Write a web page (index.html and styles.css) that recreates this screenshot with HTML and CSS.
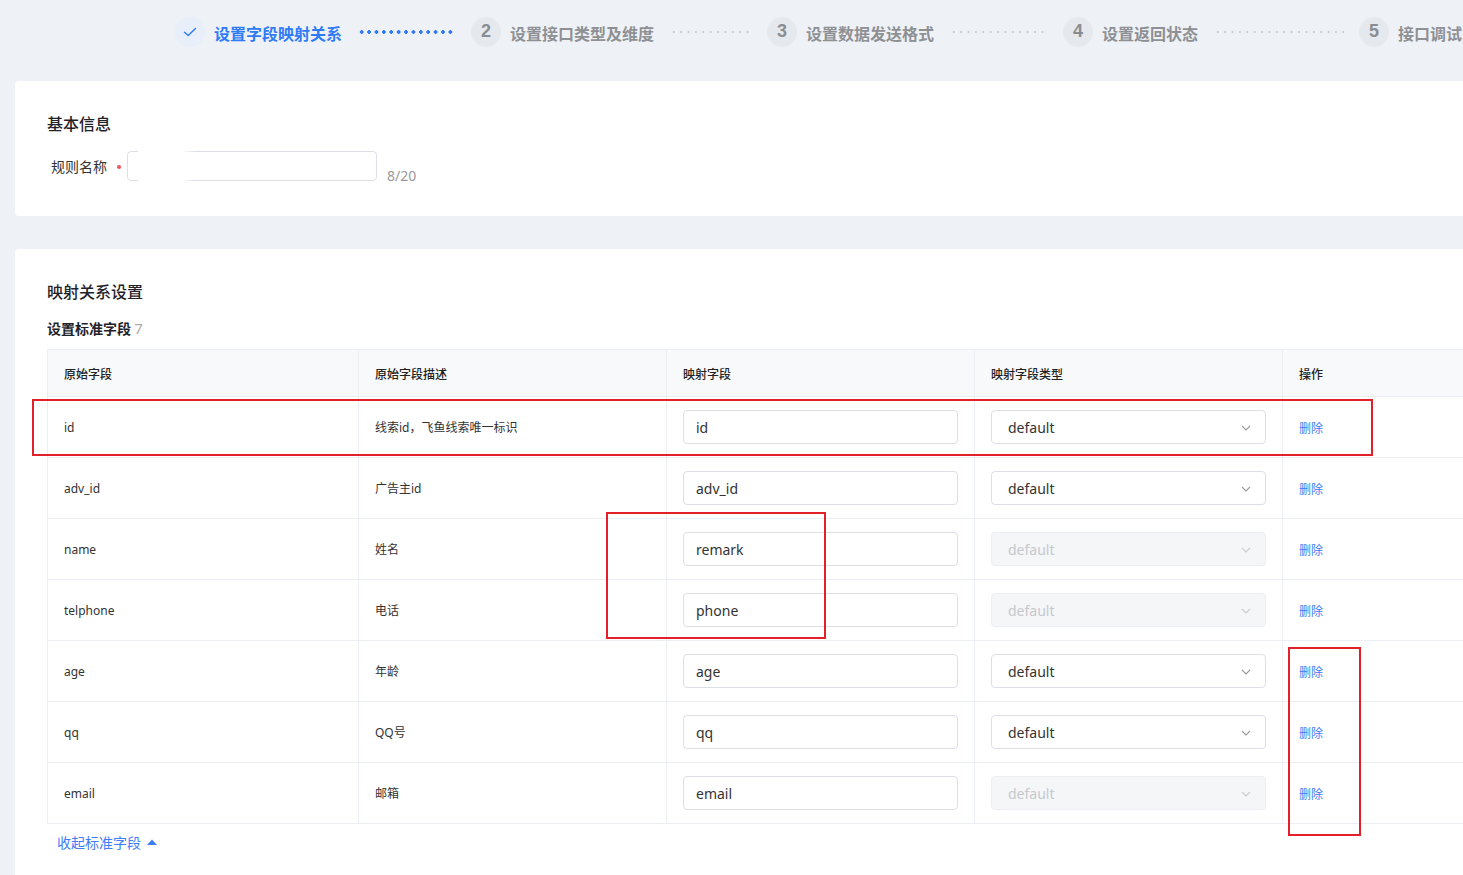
FILE: index.html
```html
<!DOCTYPE html>
<html lang="zh-CN">
<head>
<meta charset="utf-8">
<title>设置字段映射关系</title>
<link rel="stylesheet" href="styles.css">
</head>
<body>
<div class="page">
  <div class="steps">
    <div class="step step-done">
      <span class="step-icon done"><svg width="14" height="14" viewBox="0 0 14 14"><path d="M1.5 7.2 L5.2 10.6 L12.5 3.4" fill="none" stroke="#2f7bf5" stroke-width="1.4" stroke-linecap="round" stroke-linejoin="round"/></svg></span>
      <span class="step-title active">设置字段映射关系</span>
    </div>
    <span class="dots dots-blue w98"></span>
    <div class="step">
      <span class="step-icon">2</span>
      <span class="step-title">设置接口类型及维度</span>
    </div>
    <span class="dots w82"></span>
    <div class="step">
      <span class="step-icon">3</span>
      <span class="step-title">设置数据发送格式</span>
    </div>
    <span class="dots w98"></span>
    <div class="step">
      <span class="step-icon">4</span>
      <span class="step-title">设置返回状态</span>
    </div>
    <span class="dots w130"></span>
    <div class="step">
      <span class="step-icon">5</span>
      <span class="step-title">接口调试</span>
    </div>
  </div>

  <section class="card card-basic">
    <h2 class="card-title">基本信息</h2>
    <div class="form-row">
      <label class="form-label">规则名称</label>
      <span class="req-dot"></span>
      <div class="name-input"><span class="redact"></span></div>
      <span class="counter">8/20</span>
    </div>
  </section>

  <section class="card card-map">
    <h2 class="card-title">映射关系设置</h2>
    <div class="sub-title">设置标准字段 <span class="count">7</span></div>
    <div class="grid">
      <div class="cell head">原始字段</div>
      <div class="cell head">原始字段描述</div>
      <div class="cell head">映射字段</div>
      <div class="cell head">映射字段类型</div>
      <div class="cell head">操作</div>

      <div class="cell">id</div>
      <div class="cell">线索id，飞鱼线索唯一标识</div>
      <div class="cell"><div class="field">id</div></div>
      <div class="cell"><div class="select"><span>default</span><svg class="arrow" width="10" height="6" viewBox="0 0 10 6"><path d="M1 1 L5 5 L9 1" fill="none" stroke="#999" stroke-width="1.1"/></svg></div></div>
      <div class="cell"><a class="link">删除</a></div>

      <div class="cell">adv_id</div>
      <div class="cell">广告主id</div>
      <div class="cell"><div class="field">adv_id</div></div>
      <div class="cell"><div class="select"><span>default</span><svg class="arrow" width="10" height="6" viewBox="0 0 10 6"><path d="M1 1 L5 5 L9 1" fill="none" stroke="#999" stroke-width="1.1"/></svg></div></div>
      <div class="cell"><a class="link">删除</a></div>

      <div class="cell">name</div>
      <div class="cell">姓名</div>
      <div class="cell"><div class="field">remark</div></div>
      <div class="cell"><div class="select disabled"><span>default</span><svg class="arrow" width="10" height="6" viewBox="0 0 10 6"><path d="M1 1 L5 5 L9 1" fill="none" stroke="#ccc" stroke-width="1.1"/></svg></div></div>
      <div class="cell"><a class="link">删除</a></div>

      <div class="cell">telphone</div>
      <div class="cell">电话</div>
      <div class="cell"><div class="field">phone</div></div>
      <div class="cell"><div class="select disabled"><span>default</span><svg class="arrow" width="10" height="6" viewBox="0 0 10 6"><path d="M1 1 L5 5 L9 1" fill="none" stroke="#ccc" stroke-width="1.1"/></svg></div></div>
      <div class="cell"><a class="link">删除</a></div>

      <div class="cell">age</div>
      <div class="cell">年龄</div>
      <div class="cell"><div class="field">age</div></div>
      <div class="cell"><div class="select"><span>default</span><svg class="arrow" width="10" height="6" viewBox="0 0 10 6"><path d="M1 1 L5 5 L9 1" fill="none" stroke="#999" stroke-width="1.1"/></svg></div></div>
      <div class="cell"><a class="link">删除</a></div>

      <div class="cell">qq</div>
      <div class="cell">QQ号</div>
      <div class="cell"><div class="field">qq</div></div>
      <div class="cell"><div class="select"><span>default</span><svg class="arrow" width="10" height="6" viewBox="0 0 10 6"><path d="M1 1 L5 5 L9 1" fill="none" stroke="#999" stroke-width="1.1"/></svg></div></div>
      <div class="cell"><a class="link">删除</a></div>

      <div class="cell">email</div>
      <div class="cell">邮箱</div>
      <div class="cell"><div class="field">email</div></div>
      <div class="cell"><div class="select disabled"><span>default</span><svg class="arrow" width="10" height="6" viewBox="0 0 10 6"><path d="M1 1 L5 5 L9 1" fill="none" stroke="#ccc" stroke-width="1.1"/></svg></div></div>
      <div class="cell"><a class="link">删除</a></div>
    </div>
    <a class="collapse">收起标准字段 <svg width="10" height="6" viewBox="0 0 10 6"><path d="M0 6 L5 0.5 L10 6 Z" fill="#3f7cf6"/></svg></a>
  </section>

  <div class="mark mark-1"></div>
  <div class="mark mark-2"></div>
  <div class="mark mark-3"></div>
</div>
</body>
</html>
```

FILE: styles.css
```css
* { box-sizing: border-box; }
html, body {
  margin: 0;
  padding: 0;
  background: #eef2f6;
  overflow: hidden;
}
body {
  font-family: "Noto Sans", "Noto Sans CJK SC", sans-serif;
  color: #333;
  width: 1463px;
  height: 875px;
}
.page {
  position: relative;
  width: 1463px;
  height: 875px;
  overflow: hidden;
}

/* steps */
.steps {
  display: flex;
  align-items: center;
  height: 81px;
  padding: 0 0 18px 175px;
  white-space: nowrap;
}
.step {
  display: flex;
  align-items: center;
  gap: 9px;
  flex: none;
}
.step-icon {
  width: 30px;
  height: 30px;
  border-radius: 50%;
  background: #e5e8ec;
  color: #8a8d92;
  font-family: "Liberation Sans", "Noto Sans", sans-serif;
  font-weight: 700;
  font-size: 18px;
  display: flex;
  align-items: center;
  justify-content: center;
  flex: none;
}
.step-icon.done {
  background: #e8eefa;
}
.step-title {
  font-family: "Noto Sans CJK SC", sans-serif;
  font-size: 16px;
  font-weight: 700;
  color: #8e9094;
  line-height: 30px;
  padding-top: 2px;
}
.step-title.active { color: #2f7bf5; }
.dots {
  flex: none;
  height: 4px;
  margin: 0 15px 0 16px;
  background-image: radial-gradient(circle, #c9cdd3 1.1px, transparent 1.4px);
  background-size: 7.4px 4px;
  background-repeat: repeat-x;
}
.dots-blue {
  background-image: radial-gradient(circle, #2f7bf5 1.6px, transparent 1.9px);
}
.w98 { width: 98px; }
.w82 { width: 82px; }
.w130 { width: 130px; }

/* cards */
.card {
  background: #fff;
  border-radius: 4px;
  margin-left: 15px;
  width: 1520px;
  padding: 31px 32px 0 32px;
}
.card-basic {
  height: 135px;
}
.card-map {
  margin-top: 33px;
  height: 700px;
}
.card-title {
  margin: 0;
  font-family: "Noto Sans CJK SC", sans-serif;
  font-size: 16px;
  font-weight: 500;
  line-height: 22px;
  color: #1f2329;
}
.form-row {
  display: flex;
  align-items: center;
  margin-top: 17px;
  height: 30px;
}
.form-label {
  font-family: "Noto Sans CJK SC", sans-serif;
  font-size: 14px;
  color: #333;
  padding-left: 4px;
  width: 70px;
}
.req-dot {
  width: 4px;
  height: 4px;
  border-radius: 50%;
  background: #f0525a;
  margin: 2px 0 0 0;
}
.name-input {
  position: relative;
  margin-left: 6px;
  width: 250px;
  height: 30px;
  border: 1px solid #dcdfe6;
  border-radius: 4px;
  background: #fff;
}
.redact {
  position: absolute;
  left: 10px;
  top: -1px;
  bottom: -1px;
  width: 58px;
  background: linear-gradient(to right, #fff 75%, rgba(255,255,255,0));
}
.counter {
  align-self: flex-end;
  margin-left: 10px;
  margin-bottom: -4px;
  font-size: 14px;
  color: #999;
}

.sub-title {
  margin-top: 16px;
  font-family: "Noto Sans CJK SC", sans-serif;
  font-size: 14px;
  font-weight: 700;
  line-height: 20px;
  color: #1f2329;
}
.count {
  font-family: "Noto Sans", sans-serif;
  font-weight: 400;
  font-size: 15px;
  color: #aaa;
}

/* table */
.grid {
  margin-top: 11px;
  display: grid;
  grid-template-columns: 311px 308px 308px 308px 1fr;
  border-top: 1px solid #ebeef2;
  border-left: 1px solid #ebeef2;
  width: 1456px;
}
.cell {
  height: 61px;
  border-right: 1px solid #ebeef2;
  border-bottom: 1px solid #ebeef2;
  padding: 0 16px;
  display: flex;
  align-items: center;
  font-size: 12px;
  color: #333;
  font-family: "Noto Sans", "Noto Sans CJK SC", sans-serif;
}
.cell.head {
  height: 47px;
  background: #f8f9fa;
  font-family: "Noto Sans CJK SC", sans-serif;
  font-weight: 500;
  color: #222;
}
.field, .select {
  width: 100%;
  height: 34px;
  border: 1px solid #dcdfe6;
  border-radius: 4px;
  padding: 0 12px;
  display: flex;
  align-items: center;
  font-size: 14px;
  color: #333;
  background: #fff;
}
.select {
  justify-content: space-between;
  padding: 0 14px 0 16px;
}
.select.disabled {
  background: #f5f6f8;
  border-color: #eceef2;
  color: #c5c8cd;
}
.arrow { flex: none; margin-top: 1px; }
.link {
  font-family: "Noto Sans CJK SC", sans-serif;
  color: #3f7cf6;
  font-size: 12px;
  cursor: pointer;
}
.collapse {
  display: inline-flex;
  align-items: center;
  gap: 6px;
  margin: 8px 0 0 10px;
  font-family: "Noto Sans CJK SC", sans-serif;
  font-size: 14px;
  color: #3f7cf6;
  line-height: 20px;
}

/* red annotation boxes */
.mark {
  position: absolute;
  border: 2px solid #e3202a;
  pointer-events: none;
}
.mark-1 { left: 32px; top: 399px; width: 1341px; height: 57px; }
.mark-2 { left: 606px; top: 512px; width: 220px; height: 127px; }
.mark-3 { left: 1288px; top: 647px; width: 73px; height: 189px; }
```
